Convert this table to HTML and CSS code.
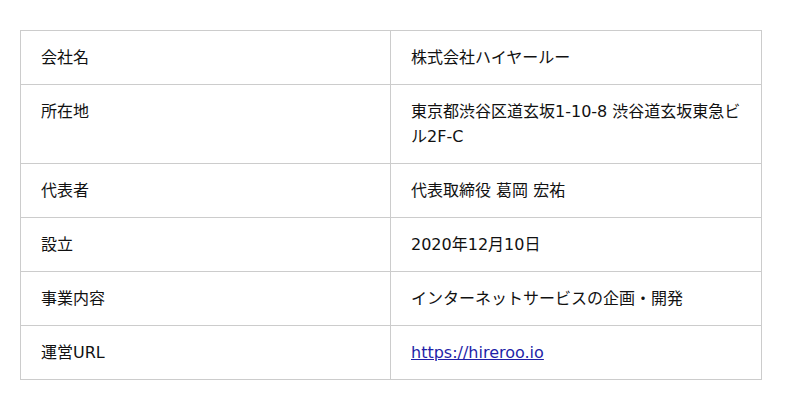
FILE: index.html
```html
<!DOCTYPE html>
<html lang="ja">
<head>
<meta charset="utf-8">
<link rel="stylesheet" href="styles.css">
</head>
<body>
<div class="wrap">
<table class="info">
<colgroup><col class="c1"><col class="c2"></colgroup>
<tr><td>会社名</td><td>株式会社ハイヤールー</td></tr>
<tr><td>所在地</td><td>東京都渋谷区道玄坂1-10-8 渋谷道玄坂東急ビル2F-C</td></tr>
<tr><td>代表者</td><td>代表取締役 葛岡 宏祐</td></tr>
<tr><td>設立</td><td>2020年12月10日</td></tr>
<tr><td>事業内容</td><td>インターネットサービスの企画・開発</td></tr>
<tr><td>運営URL</td><td><a href="https://hireroo.io">https://hireroo.io</a></td></tr>
</table>
</div>
</body>
</html>
```
FILE: styles.css
```css
html, body {
  margin: 0;
  background: #fff;
}
.wrap {
  padding: 30px 0 0 20px;
}
.info {
  width: 742px;
  border-collapse: collapse;
  table-layout: fixed;
  font-family: "DejaVu Sans", "Noto Sans CJK JP", sans-serif;
  font-size: 16px;
  line-height: 25px;
  color: #111;
}
.c1 { width: 370px; }
.info td {
  border: 1px solid #ccc;
  padding: 14px 18px 14px 20px;
  vertical-align: top;
}
.info a {
  color: #1f1fa8;
}
```
